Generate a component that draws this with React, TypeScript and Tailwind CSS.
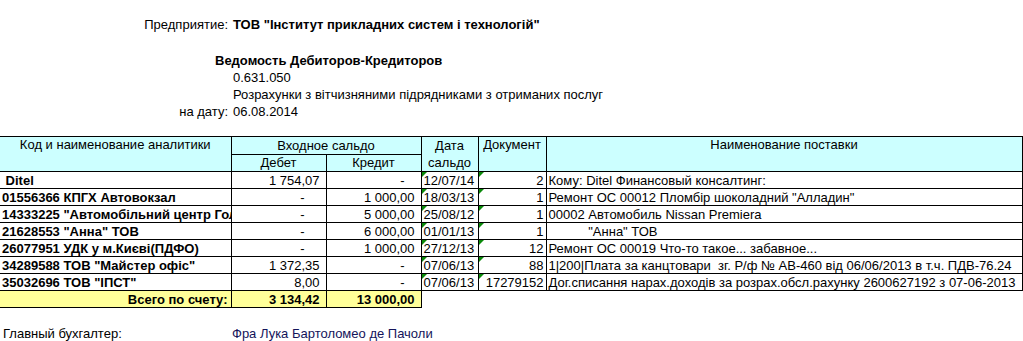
import React from "react";

interface Row {
  name: string;
  debet: string;
  kredit: string;
  date: string;
  doc: string;
  desc: string;
}

const rows: Row[] = [
  { name: " Ditel", debet: "1 754,07", kredit: "-", date: "12/07/14", doc: "2", desc: "Кому: Ditel Финансовый консалтинг:" },
  { name: "01556366 КПГХ Автовокзал", debet: "-", kredit: "1 000,00", date: "18/03/13", doc: "1", desc: "Ремонт ОС 00012 Пломбір шоколадний \"Алладин\"" },
  { name: "14333225 \"Автомобільний центр Голосіїв\"", debet: "-", kredit: "5 000,00", date: "25/08/12", doc: "1", desc: "00002 Автомобиль Nissan Premiera" },
  { name: "21628553 \"Анна\" ТОВ", debet: "-", kredit: "6 000,00", date: "01/01/13", doc: "1", desc: "           \"Анна\" ТОВ" },
  { name: "26077951 УДК у м.Києві(ПДФО)", debet: "-", kredit: "1 000,00", date: "27/12/13", doc: "12", desc: "Ремонт ОС 00019 Что-то такое... забавное..." },
  { name: "34289588 ТОВ \"Майстер офіс\"", debet: "1 372,35", kredit: "-", date: "07/06/13", doc: "88", desc: "1|200|Плата за канцтовари  зг. Р/ф № АВ-460 від 06/06/2013 в т.ч. ПДВ-76.24" },
  { name: "35032696 ТОВ \"ІПСТ\"", debet: "8,00", kredit: "-", date: "07/06/13", doc: "17279152", desc: "Дог.списання нарах.доходів за розрах.обсл.рахунку 2600627192 з 07-06-2013" },
];

// little green "number stored as text" marker, like Excel draws
const Marker = () => (
  <svg className="absolute left-0 top-0" width="5" height="5" viewBox="0 0 5 5">
    <polygon points="0,0 5,0 0,5" fill="#0a8a0a" />
  </svg>
);

const cell = "border border-black h-[17px] p-0 leading-[15px] align-middle whitespace-nowrap overflow-hidden";

export default function App() {
  return (
    <div className="w-[1023px] h-[341px] bg-white text-black text-[13px] overflow-hidden" style={{ fontFamily: '"Liberation Sans", Arial, sans-serif' }}>
      <div className="pt-[16px]">
        <div className="flex h-[17px] items-center">
          <span className="w-[228px] text-right">Предприятие:</span>
          <span className="ml-[5px] font-bold">ТОВ "Інститут прикладних систем і технологій"</span>
        </div>
        <div className="mt-[19px] flex h-[17px] items-center pl-[215px] font-bold">Ведомость Дебиторов-Кредиторов</div>
        <div className="flex h-[17px] items-center pl-[233px]">0.631.050</div>
        <div className="flex h-[17px] items-center pl-[233px]">Розрахунки з вітчизняними підрядниками з отриманих послуг</div>
        <div className="flex h-[17px] items-center">
          <span className="w-[228px] text-right">на дату:</span>
          <span className="ml-[5px]">06.08.2014</span>
        </div>
      </div>

      <table className="mt-[16px] border-collapse table-fixed w-[1022px]">
        <colgroup>
          <col className="w-[231px]" />
          <col className="w-[95px]" />
          <col className="w-[95px]" />
          <col className="w-[57px]" />
          <col className="w-[68px]" />
          <col className="w-[476px]" />
        </colgroup>
        <thead>
          <tr className="bg-[#ccffff]">
            <th rowSpan={2} className={`${cell} border-l-0 font-normal text-center align-top`}>Код и наименование аналитики</th>
            <th colSpan={2} className={`${cell} font-normal text-center`}>Входное сальдо</th>
            <th rowSpan={2} className={`${cell} font-normal text-center leading-[17px]`}>Дата<br />сальдо</th>
            <th rowSpan={2} className={`${cell} font-normal text-center align-top`}>Документ</th>
            <th rowSpan={2} className={`${cell} font-normal text-center align-top`}>Наименование поставки</th>
          </tr>
          <tr className="bg-[#ccffff]">
            <th className={`${cell} font-normal text-center`}>Дебет</th>
            <th className={`${cell} font-normal text-center`}>Кредит</th>
          </tr>
        </thead>
        <tbody>
          {rows.map((r, i) => (
            <tr key={i}>
              <td className={`${cell} border-l-0 font-bold pl-[2px] whitespace-pre`}>{r.name}</td>
              <td className={`${cell} text-right ${r.debet === "-" ? "pr-[21px]" : "pr-[6px]"}`}>{r.debet}</td>
              <td className={`${cell} text-right ${r.kredit === "-" ? "pr-[16px]" : "pr-[6px]"}`}>{r.kredit}</td>
              <td className={`${cell} relative pl-[2px]`}><Marker />{r.date}</td>
              <td className={`${cell} relative text-right pr-[2px] overflow-visible`}><Marker />{r.doc}</td>
              <td className={`${cell} pl-[2px] whitespace-pre`}>{r.desc}</td>
            </tr>
          ))}
          <tr>
            <td className={`${cell} border-l-0 bg-[#ffff99] font-bold text-right pr-[3px]`}>Всего по счету:</td>
            <td className={`${cell} bg-[#ffff99] font-bold text-right pr-[6px]`}>3 134,42</td>
            <td className={`${cell} bg-[#ffff99] font-bold text-right pr-[6px]`}>13 000,00</td>
            <td className="p-0 border-t border-black" colSpan={3}></td>
          </tr>
        </tbody>
      </table>

      <div className="mt-[17px] flex h-[17px] items-center">
        <span className="w-[232px] pl-[3px]">Главный бухгалтер:</span>
        <span className="text-[#14145a]">Фра Лука Бартоломео де Пачоли</span>
      </div>
    </div>
  );
}
